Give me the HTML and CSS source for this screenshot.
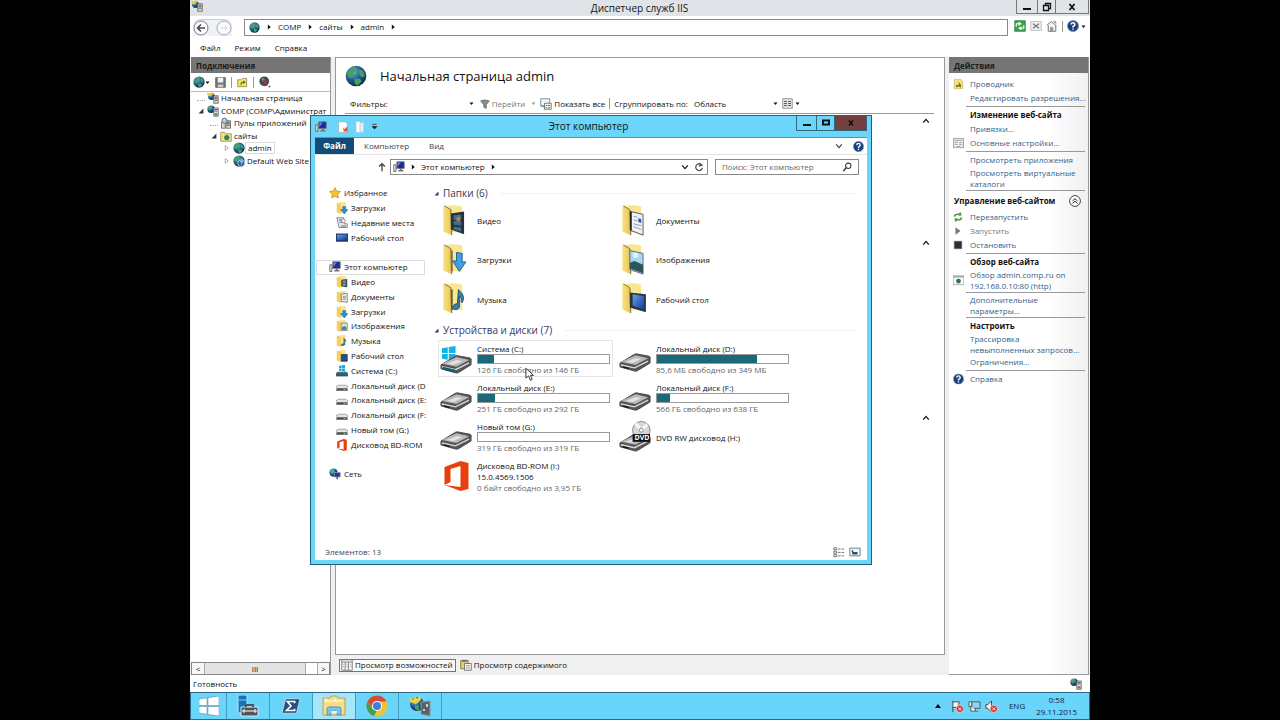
FILE: index.html
```html
<!DOCTYPE html>
<html lang="ru">
<head>
<meta charset="utf-8">
<title>Диспетчер служб IIS</title>
<link rel="stylesheet" href="styles.css">
</head>
<body>
<svg class="defs" aria-hidden="true">
  <defs>
    <radialGradient id="gSea" cx=".35" cy=".3" r=".8"><stop offset="0" stop-color="#6fb6dc"/><stop offset=".5" stop-color="#1d5c8c"/><stop offset="1" stop-color="#0b2440"/></radialGradient>
    <linearGradient id="gFold" x2="1"><stop offset="0" stop-color="#f8e283"/><stop offset="1" stop-color="#e9c452"/></linearGradient>
    <linearGradient id="gScr" x2="1" y2="1"><stop offset="0" stop-color="#6aa0e8"/><stop offset="1" stop-color="#123a96"/></linearGradient>
  </defs>
  <symbol id="globe" viewBox="0 0 16 16"><circle cx="8" cy="8" r="7.500" fill="url(#gSea)"/><path d="M2 5q2-3 6-3.500l1 2-3 2 1 2-3 2q-3-1-2-4.500zM10 3l3 1 1.500 4-2 1-2-2zM7 10l4 0 1 2-3 3-2-2z" fill="#47a05c"/></symbol>
  <symbol id="server" viewBox="0 0 16 16"><circle cx="5.500" cy="5.500" r="5" fill="url(#gSea)"/><path d="M1 4l4-3 2 2-3 4z" fill="#4aa850"/><path d="M9 4h6v11H9z" fill="#e2e2de" stroke="#555"/><path d="M10 6h4M10 8h4" stroke="#333"/><path d="M10 11h4v3h-4z" fill="#6b7a62"/></symbol>
  <symbol id="iis" viewBox="0 0 16 16"><circle cx="6" cy="6" r="4.500" fill="url(#gSea)"/><path d="M0 1l4 1 3-2 1 3-4 3-3-1z" fill="#ecc93a"/><path d="M9 5h6v10H9z" fill="#d7d7d0" stroke="#555"/><path d="M10 7h4M10 9h4M10 11h4" stroke="#444"/></symbol>
  <symbol id="pools" viewBox="0 0 16 16"><path d="M2 7h5v8H2zM8 5h6v10H8z" fill="#d6d8d8" stroke="#555"/><circle cx="6" cy="5" r="3.500" fill="#b9cdd2" stroke="#385a66"/><path d="M9 7h4M9 9h4M9 11h4" stroke="#333"/></symbol>
  <symbol id="foldglobe" viewBox="0 0 16 16"><path d="M1 3h5l1 2h8v10H1z" fill="#f4e287" stroke="#8e8144"/><circle cx="9" cy="10" r="3.500" fill="#348052"/></symbol>
  <symbol id="globeq" viewBox="0 0 16 16"><use href="#globe"/><circle cx="11" cy="11" r="4.500" fill="#16559c" stroke="#dfe9f5"/><path d="M9.500 10q0-1.800 1.600-1.800t1.500 1.500q0 1-1.500 1.500v.5m0 1v1" stroke="#fff" fill="none" stroke-width="1.200"/></symbol>
  <symbol id="floppy" viewBox="0 0 16 16"><path d="M1 1h14v14H1z" fill="#777" stroke="#444"/><path d="M4 1h8v7H4z" fill="#f2f2f2"/><path d="M4 11h8v4H4z" fill="#ccc"/></symbol>
  <symbol id="foldup" viewBox="0 0 16 16"><path d="M1 4h5l2-2h6v12H1z" fill="#f6e468" stroke="#7b7433"/><path d="M6 12V9q0-1.500 2-1.500h2M9 5.500l2.500 2L9 9.500" stroke="#2f7a2b" stroke-width="1.500" fill="none"/></symbol>
  <symbol id="globex" viewBox="0 0 16 16"><circle cx="7" cy="7" r="6.500" fill="#374c55"/><path d="M3 4l3-2 2 3-3 3z" fill="#699a72"/><path d="M5 5l6 8M12 5l-7 7" stroke="#c22f2f" stroke-width="1.500"/><path d="M13 13h2v2h-2z" fill="#333"/></symbol>
  <symbol id="back" viewBox="0 0 16 16"><circle cx="8" cy="8" r="7" fill="#fcfcfd" stroke="#7b8089"/><path d="M12 8H4.500M8 4.500L4.500 8 8 11.500" stroke="#444a55" stroke-width="1.600" fill="none"/></symbol>
  <symbol id="fwd" viewBox="0 0 16 16"><circle cx="8" cy="8" r="7" fill="#f7f9fc" stroke="#a3a8b4"/><path d="M5 8h6M9 6l2 2-2 2" stroke="#d4d9e1" fill="none"/></symbol>
  <symbol id="refresh" viewBox="0 0 16 16"><path d="M1 1h14v14H1z" fill="#37a549" stroke="#23702e"/><path d="M3 9V5h5m-2-2l3 2-3 2M13 7v4H8m2-2l-3 2 3 2" stroke="#fff" stroke-width="1.600" fill="none"/></symbol>
  <symbol id="stopx" viewBox="0 0 16 16"><path d="M1 2h14v12H1z" fill="#eee" stroke="#b4b4b4"/><path d="M4 5l8 6M12 5l-8 6" stroke="#777" stroke-width="1.500"/></symbol>
  <symbol id="home" viewBox="0 0 16 16"><path d="M1 7l6-5 7 6M3 7v8h10V7" fill="#f4f4f4" stroke="#777" stroke-width="1.300"/><path d="M6 10h3v5H6zM10 2h3v3" fill="#9a9a9a" stroke="#888"/></symbol>
  <symbol id="help" viewBox="0 0 16 16"><circle cx="8" cy="8" r="7.500" fill="#173f7c" stroke="#8ea3c2"/><path d="M5.500 6Q5.500 3.500 8 3.500T10.500 6Q10.500 7.300 8 8.700V10m0 1.300v1.700" stroke="#fff" stroke-width="2" fill="none"/></symbol>
  <symbol id="funnel" viewBox="0 0 16 16"><path d="M1 3q7-3 14 0L10 9v6l-4-2V9z" fill="#8b8b8b" stroke="#555"/></symbol>
  <symbol id="showall" viewBox="0 0 16 16"><path d="M1 1h12v10H1z" fill="#f5f8f8" stroke="#5c7280"/><path d="M6 7h9v8H6z" fill="#fff" stroke="#555"/><path d="M7.500 10h2m1 0h3m-6 3h2m1 0h3" stroke="#333"/><path d="M1 9l4 4v-3" fill="#3c8fb0"/></symbol>
  <symbol id="gridview" viewBox="0 0 16 16"><path d="M1 1h14v14H1z" fill="#e2e2e2" stroke="#777"/><path d="M3 5h4M9 5h4M3 8h4M9 8h4M3 11h4M9 11h4" stroke="#555" stroke-width="1.500"/></symbol>
  <symbol id="tabs" viewBox="0 0 16 16"><path d="M1 1h14v14H1z" fill="#f7f7f7" stroke="#666"/><path d="M1 4h14M5.500 4v11M10 4v11" stroke="#666"/><path d="M7 7h2M7 10h2M12 7h2M12 10h2M2 7h2M2 10h2" stroke="#999"/></symbol>
  <symbol id="clip" viewBox="0 0 16 16"><path d="M1 2h10v11H1z" fill="#e4d36b" stroke="#665f31"/><path d="M3 1h6v3H3z" fill="#777"/><path d="M6 6h9v9H6z" fill="#fafafa" stroke="#555"/><path d="M8 9h5M8 12h5" stroke="#666"/></symbol>
  <symbol id="explore" viewBox="0 0 16 16"><path d="M2 1h9l3 3v11H2z" fill="#f5e482" stroke="#bbaa50"/><path d="M7 4l2 4-2 3 5 2-1-5z" fill="#6f642c"/><circle cx="6" cy="11" r="2" fill="#8a7b34"/></symbol>
  <symbol id="props" viewBox="0 0 16 16"><path d="M1 1h14v14H1z" fill="#f4f4f4" stroke="#666"/><path d="M3 4h10M3 7h4M9 7h4M3 10h4M9 10h4M5 13h6" stroke="#777"/></symbol>
  <symbol id="restart" viewBox="0 0 16 16"><path d="M1 7q1-5 8-4.500L12 0l2 5.500-6 .5 1.500-1.500Q5 4 3.500 7.500zM15 9q-1 5-8 4.500L4 16l-2-5.500 6-.5-1.500 1.500Q11 12 12.500 8.500z" fill="#4a9a3e"/></symbol>
  <symbol id="play" viewBox="0 0 16 16"><path d="M4 2l8 6-8 6z" fill="#777"/></symbol>
  <symbol id="stop" viewBox="0 0 16 16"><path d="M2 2h12v12H2z" fill="#2b2f33" stroke="#666"/></symbol>
  <symbol id="browse" viewBox="0 0 16 16"><path d="M0 2h16v13H0z" fill="#fafafa" stroke="#777"/><path d="M0 3.500h16" stroke="#91a1b5" stroke-width="2"/><circle cx="8" cy="9.500" r="3.500" fill="#28745e"/></symbol>
  <symbol id="pc" viewBox="0 0 16 16"><path d="M1 5h3v9H1z" fill="#ddd" stroke="#555"/><path d="M5 1h10v9H5z" fill="#1c2c9a" stroke="#777"/><path d="M6 2h4L6 8z" fill="#7189d8"/><path d="M9 10h3v2h2v2H7v-2h2z" fill="#777"/></symbol>
  <symbol id="star" viewBox="0 0 16 16"><path d="M8 .8l2.200 4.700 5.100.6-3.800 3.500 1 5.100L8 12.200l-4.500 2.500 1-5.100L.7 6.100l5.100-.6z" fill="#f9c32f" stroke="#c58a19"/></symbol>
  <symbol id="sfold" viewBox="0 0 16 16"><path d="M1 1l6 1v14l-6-2z" fill="#f2cf5e"/><path d="M4 0h9v14H7V3z" fill="#f8e591"/></symbol>
  <symbol id="s-vid" viewBox="0 0 16 16"><use href="#sfold"/><path d="M7 5l8-1v11l-8-1z" fill="#3a4a55"/><path d="M9 6h4v3H9zM9 10h4v3H9z" fill="#7c9c98"/></symbol>
  <symbol id="s-doc" viewBox="0 0 16 16"><use href="#sfold"/><path d="M7 4l8-1v12l-8-1z" fill="#eef0f2" stroke="#666"/><path d="M9 7h4M9 9h4M9 11h4" stroke="#56779e"/></symbol>
  <symbol id="s-dl" viewBox="0 0 16 16"><use href="#sfold"/><path d="M9 6h4v4h3l-5 6-5-6h3z" fill="#2b8dd1" stroke="#1d5f94" stroke-width=".6"/></symbol>
  <symbol id="s-img" viewBox="0 0 16 16"><use href="#sfold"/><path d="M7 4h8v10H7z" fill="#cfe3ee" stroke="#777"/><path d="M8 13v-3l3-2 3 2v3z" fill="#47807a"/></symbol>
  <symbol id="s-mus" viewBox="0 0 16 16"><use href="#sfold"/><path d="M10 3l4 5-2 1v4q-3 3-5 1t3-3z" fill="#3f7480"/></symbol>
  <symbol id="s-desk" viewBox="0 0 16 16"><use href="#sfold"/><path d="M7 6h8v9H7z" fill="#1e4f9d" stroke="#333"/></symbol>
  <symbol id="recent" viewBox="0 0 16 16"><path d="M1 1h9l1 8h4v5H4L2 4z" fill="#e4e9ec" stroke="#5f6a72"/><path d="M4 4h4M5 7h3M7 12h6" stroke="#56606a" stroke-width="1.300"/><circle cx="10" cy="5" r="2.500" fill="#fff" stroke="#777"/></symbol>
  <symbol id="desk" viewBox="0 0 16 16"><path d="M0 2h16v11H0z" fill="#1d3d76"/><path d="M1.500 3.500h13v7h-13z" fill="url(#gScr)"/></symbol>
  <symbol id="sdisk" viewBox="0 0 16 16"><path d="M3 7h10l3 2v5H0V9z" fill="#e3e5e5" stroke="#777" stroke-width=".8"/><path d="M1 11h14v3H1z" fill="#4a4d4d"/><path d="M10 12h3v1h-3z" fill="#9ed0a0"/></symbol>
  <symbol id="swin" viewBox="0 0 16 16"><path d="M4 1l3.500-.5V4H4zM8 .4l4-.4v4H8zM4 4.500h3.500V8L4 7.600zM8 4.500h4v4L8 8z" fill="#16a7dc"/><path d="M2 9h12l2 2v4H0v-4z" fill="#4d646a"/><path d="M1 12h14v3H1z" fill="#265c78"/></symbol>
  <symbol id="office" viewBox="0 0 26 30"><path d="M1 6L17 0l8 2v26l-8 2L1 24l16 2V5L7 8v13l-6 3z" fill="#e8400d"/></symbol>
  <symbol id="net" viewBox="0 0 16 16"><circle cx="6" cy="6" r="5.500" fill="url(#gSea)"/><path d="M2 4l4-3 1 4-4 3z" fill="#52a8a8"/><path d="M7 6h8v6H7z" fill="#26359f" stroke="#99a"/><path d="M10 12h2v3h-2z" fill="#555"/></symbol>
  <symbol id="bfold" viewBox="0 0 32 36"><path d="M4 2q14-2 18 1v27H10z" fill="#f8e790"/><path d="M2 2l9 5v26l-9-4z" fill="url(#gFold)"/><path d="M3 2l7 4 1 27" fill="none" stroke="#7d6a32"/></symbol>
  <symbol id="b-vid" viewBox="0 0 32 36"><use href="#bfold"/><path d="M10 10l14-2v24l-14-5z" fill="#25323c"/><path d="M13 12l8-1v5l-8 1zM13 18h8v5l-8-1zM13 24l8 1v4l-8-2z" fill="#406f8f"/><circle cx="18" cy="16" r="2.500" fill="#b67a4a"/></symbol>
  <symbol id="b-doc" viewBox="0 0 32 36"><use href="#bfold"/><path d="M11 8l13 3v22l-13-5z" fill="#eef1f5" stroke="#555"/><path d="M11 8v20" stroke="#222" stroke-width="2"/><path d="M14 13l4 1M14 17l4 1M14 21l8 2M14 24l8 3" stroke="#8b99aa"/><path d="M19 15l3 1v4l-3-1z" fill="#2854a3"/></symbol>
  <symbol id="b-dl" viewBox="0 0 32 36"><use href="#bfold"/><path d="M11 8v22" stroke="#7d7148" stroke-width="2"/><path d="M16 10l6 1v9h4l-7 10-7-11h4z" fill="#3e9fe2" stroke="#1d6098"/></symbol>
  <symbol id="b-img" viewBox="0 0 32 36"><use href="#bfold"/><path d="M10 8l14 3v22l-14-5z" fill="#a9d6ee" stroke="#667"/><path d="M10 21l5-2 9 4v9l-14-5z" fill="#2e5659"/><circle cx="16" cy="13" r="3" fill="#e2f2fb"/></symbol>
  <symbol id="b-mus" viewBox="0 0 32 36"><use href="#bfold"/><path d="M11 8v22" stroke="#685c35" stroke-width="2"/><path d="M18 8l1 1q7 6 3 13l-1-1q1-4-2-6v12q-3 4-7 1 0-5 5-5z" fill="#3580ae" stroke="#234f6c"/></symbol>
  <symbol id="b-desk" viewBox="0 0 32 36"><use href="#bfold"/><path d="M10 11l17 2v19l-17-5z" fill="#2a3448"/><path d="M13 13l12 2v14l-12-4z" fill="url(#gScr)"/></symbol>
  <symbol id="disk" viewBox="0 0 34 22"><path d="M1 11L16 2q2-1 4 0l11 2q2 1 1 3v4L19 19q-2 1-4 0L1 15z" fill="#555" stroke="#4a4a4a"/><path d="M2 10L17 3l13 3-13 7z" fill="#b9b9b9"/><path d="M7 10l10-4 6 1-9 4z" fill="#e3e3e3"/><path d="M2 13l14 3 14-7" fill="none" stroke="#dadada" stroke-width="1.500"/><path d="M4 15l6 1.500" stroke="#111" stroke-width="1.500"/></symbol>
  <symbol id="diskwin" viewBox="0 0 34 34"><path d="M2 6l6-1.200v6H2zM9 4.600L16 3.500v7.300H9zM2 11.800h6v6l-6-1zM9 11.800h7v7.300l-7-1.100z" fill="#14b3e4"/><svg y="12" width="34" height="22"><use href="#disk"/></svg><path d="M3 25l13 3v3L3 28z" fill="#195a6e"/></symbol>
  <symbol id="dvd" viewBox="0 0 34 34"><svg y="12" width="34" height="22"><use href="#disk"/></svg><circle cx="23" cy="10" r="9" fill="#d4d6d8" stroke="#888"/><path d="M23 10L17 3M23 10l6-6" stroke="#f8f8f8" stroke-width="3"/><circle cx="23" cy="10" r="2" fill="#fff" stroke="#888"/><path d="M14 14h18v8H14z" fill="#111"/></symbol>
  <symbol id="page" viewBox="0 0 16 16"><path d="M2 1h9l3 3v11H2z" fill="#fff" stroke="#aaa"/><path d="M8 9l2 2 4-4v7H9z" fill="#df5636"/></symbol>
  <symbol id="blank" viewBox="0 0 16 16"><path d="M3 1h5v14H3z" fill="#fcfcf0"/><path d="M8 2h5v13H8z" fill="#e5eff4" stroke="#bbd"/></symbol>
  <symbol id="qdown" viewBox="0 0 10 10"><path d="M2 2h6M1.500 5h7L5 8.500z" stroke="#222" fill="#222"/></symbol>
  <symbol id="chev" viewBox="0 0 10 10"><path d="M1.500 3L5 7l3.500-4" stroke="currentColor" fill="none" stroke-width="1.500"/></symbol>
  <symbol id="chevup" viewBox="0 0 10 10"><path d="M1.500 7L5 3l3.500 4" stroke="currentColor" fill="none" stroke-width="1.600"/></symbol>
  <symbol id="down" viewBox="0 0 10 10"><path d="M1 3h8L5 8z" fill="currentColor"/></symbol>
  <symbol id="right" viewBox="0 0 10 10"><path d="M3 1v8l5-4z" fill="currentColor"/></symbol>
  <symbol id="open" viewBox="0 0 10 10"><path d="M9 1v8H1z" fill="currentColor"/></symbol>
  <symbol id="closed" viewBox="0 0 10 10"><path d="M2 1v8l5-4z" fill="#fff" stroke="#777"/></symbol>
  <symbol id="min" viewBox="0 0 12 12"><path d="M2 7h8v2H2z" fill="currentColor"/></symbol>
  <symbol id="max" viewBox="0 0 12 12"><path d="M3 3.500h6v4H3z" stroke="currentColor" stroke-width="2" fill="none"/></symbol>
  <symbol id="rest" viewBox="0 0 12 12"><path d="M2.500 4.500h5v5h-5zM4.500 4V2.500h5v5H8" stroke="currentColor" stroke-width="1.300" fill="none"/></symbol>
  <symbol id="close" viewBox="0 0 12 12"><path d="M3.500 3l5 6M8.500 3l-5 6" stroke="currentColor" stroke-width="1.800"/></symbol>
  <symbol id="circup" viewBox="0 0 12 12"><circle cx="6" cy="6" r="5.400" fill="#fff" stroke="#444"/><path d="M3.500 6L6 3.700 8.500 6M3.500 8.500L6 6.200l2.500 2.300" stroke="#222" fill="none"/></symbol>
  <symbol id="up" viewBox="0 0 12 12"><path d="M6 11V2M2.500 5.500L6 2l3.500 3.500" stroke="#444" stroke-width="1.600" fill="none"/></symbol>
  <symbol id="reload" viewBox="0 0 12 12"><path d="M9 3.500A4 4 0 1 0 10 7M6 1.200L9.500 3.700 6 5" stroke="#444" stroke-width="1.400" fill="none"/></symbol>
  <symbol id="loupe" viewBox="0 0 12 12"><circle cx="7.500" cy="4.500" r="3.200" stroke="#444" stroke-width="1.300" fill="none"/><path d="M5 7l-3.500 4" stroke="#444" stroke-width="1.800"/></symbol>
  <symbol id="details" viewBox="0 0 14 12"><path d="M1 1h3v2.500H1zM1 5h3v2.500H1zM1 9h3v2.500H1z" fill="#fff" stroke="#666"/><path d="M5.500 2.500h3.500m1 0h3M5.500 6.500h3.500m1 0h3M5.500 10.500h3.500m1 0h3" stroke="#666"/></symbol>
  <symbol id="tiles" viewBox="0 0 14 12"><path d="M1 1.500h12v9H1z" fill="#f2f8fa" stroke="#55707a"/><path d="M3 4h2v2h5v3H4z" fill="#2d5261"/></symbol>
  <symbol id="win" viewBox="0 0 20 20"><path d="M0 3l8-1.200V9.500H0zM9 1.700L20 0v9.500H9zM0 10.500h8v7.700L0 17zM9 10.500h11V20L9 18.400z" fill="#fff" stroke="#4b7d96" stroke-width=".5"/></symbol>
  <symbol id="srvmgr" viewBox="0 0 22 22"><path d="M1 0h9v18H1z" fill="#1477b5" stroke="#b8e6f8"/><path d="M2 5h7" stroke="#84c8ee"/><path d="M4 12h17v9H4z" fill="#4f5459" stroke="#d8eaf0"/><path d="M9 12v-2h7v2" stroke="#4f5459" stroke-width="2" fill="none"/><path d="M5 16h15M7 14v4M18 14v4" stroke="#fff"/></symbol>
  <symbol id="ps" viewBox="0 0 22 18"><path d="M5 1h16l-4 16H1z" fill="#27517c" stroke="#c4ddea"/><path d="M15 6V4H7l4 5-5 5h9v-2" stroke="#fff" stroke-width="1.800" fill="none"/></symbol>
  <symbol id="files" viewBox="0 0 24 22"><path d="M1 3h7l1-2h6l1 2h7v17H1z" fill="#f3df87" stroke="#b6a154"/><path d="M3 6h18M4 3v3M13 3v3" stroke="#fff"/><path d="M5 20v-6q0-2 2-2h10q2 0 2 2v6h-4v-4H9v4z" fill="#7cc4e8" stroke="#5594bb"/><path d="M9 16h6v2H9z" fill="#eaf7fd"/></symbol>
  <symbol id="chrome" viewBox="0 0 22 22"><circle cx="11" cy="11" r="10.500" fill="#eac53b"/><path d="M1.500 6.500A10.500 10.500 0 0 1 20.500 6.500H11L6.500 13z" fill="#d74a39"/><path d="M1.500 6.500L6.500 14l4 2-2.500 5A10.500 10.500 0 0 1 1.500 6.500z" fill="#3f9d55"/><circle cx="11" cy="11" r="5" fill="#fff"/><circle cx="11" cy="11" r="4" fill="#3c7fd8"/></symbol>
  <symbol id="iisbig" viewBox="0 0 22 22"><circle cx="8" cy="9" r="7" fill="url(#gSea)"/><path d="M0 2l4 3 2-4 2 3 3-4 1 5-5 4-6-2z" fill="#ead540"/><path d="M6 10l4 1v5l-4-2z" fill="#46a06b"/><path d="M12 7l9-1v15l-9-2z" fill="#5a6267" stroke="#89949a"/><path d="M17 9h2v3h-2zM14 14h2v2h-2z" fill="#c5ced2"/></symbol>
  <symbol id="flag" viewBox="0 0 14 14"><path d="M2 1v12M2 2h7l-1 3 2 3H2" stroke="#444" fill="#f7f7f7"/><circle cx="9.500" cy="9.500" r="4" fill="#cf3d37" stroke="#fff" stroke-width=".6"/><path d="M8 8l3 3M11 8l-3 3" stroke="#fff"/></symbol>
  <symbol id="lan" viewBox="0 0 14 14"><path d="M4 2h9v7H4z" fill="#8fd4ee" stroke="#4a5960"/><path d="M1 2h3v5H1zM3 7v5h8M8 9v3" stroke="#4a5960" fill="#e7eef0"/></symbol>
  <symbol id="vol" viewBox="0 0 14 14"><path d="M1 5h2l4-4v12L3 9H1z" fill="#f2f2f2" stroke="#444"/><circle cx="9.500" cy="9.500" r="4" fill="#cf3d37" stroke="#fff" stroke-width=".6"/><path d="M8 8l3 3M11 8l-3 3" stroke="#fff"/></symbol>
  <symbol id="cursor" viewBox="0 0 10 16"><path d="M1 1v11l3-2.500 2 5 2-1-2-4.500h3.500z" fill="#fff" stroke="#222"/></symbol>
</svg>

<div class="desktop">
  <div class="iis">
    <header class="titlebar">
      <svg class="i12"><use href="#iis"/></svg>
      <h1>Диспетчер служб IIS</h1>
      <div class="winbtns">
        <button aria-label="Свернуть"><svg class="i12"><use href="#min"/></svg></button>
        <button aria-label="Восстановить"><svg class="i12"><use href="#rest"/></svg></button>
        <button aria-label="Закрыть"><svg class="i12"><use href="#close"/></svg></button>
      </div>
    </header>

    <div class="addressrow">
      <div class="navbtns">
        <button aria-label="Назад"><svg class="i16"><use href="#back"/></svg></button>
        <button aria-label="Вперёд"><svg class="i16"><use href="#fwd"/></svg></button>
      </div>
      <nav class="crumbs">
        <svg class="i11"><use href="#globe"/></svg><svg class="i6"><use href="#right"/></svg>
        <a href="#">COMP</a><svg class="i6"><use href="#right"/></svg>
        <a href="#">сайты</a><svg class="i6"><use href="#right"/></svg>
        <a href="#">admin</a><svg class="i6"><use href="#right"/></svg>
      </nav>
      <div class="addrtools">
        <button aria-label="Обновить"><svg class="i12"><use href="#refresh"/></svg></button>
        <button aria-label="Остановить"><svg class="i12"><use href="#stopx"/></svg></button>
        <button aria-label="Домой"><svg class="i12"><use href="#home"/></svg></button>
        <span class="vline"></span>
        <button aria-label="Справка"><svg class="i12"><use href="#help"/></svg><svg class="i5"><use href="#down"/></svg></button>
      </div>
    </div>

    <nav class="menubar"><button>Файл</button><button>Режим</button><button>Справка</button></nav>

    <div class="workspace">
      <section class="conn">
        <h2 class="panehead">Подключения</h2>
        <div class="conntools">
          <button aria-label="Подключиться"><svg class="i12"><use href="#globe"/></svg><svg class="i5"><use href="#down"/></svg></button>
          <button aria-label="Сохранить"><svg class="i11"><use href="#floppy"/></svg></button>
          <span class="vline"></span>
          <button aria-label="Вверх"><svg class="i11"><use href="#foldup"/></svg></button>
          <span class="vline"></span>
          <button aria-label="Удалить"><svg class="i12"><use href="#globex"/></svg></button>
        </div>
        <ul class="tree">
          <li class="l1"><span class="dots"></span><svg class="i12"><use href="#iis"/></svg><span>Начальная страница</span></li>
          <li class="l1"><svg class="tw"><use href="#open"/></svg><svg class="i12"><use href="#server"/></svg><span>COMP (COMP\Администрат</span></li>
          <li class="l2"><span class="dots"></span><svg class="i12"><use href="#pools"/></svg><span>Пулы приложений</span></li>
          <li class="l2"><svg class="tw"><use href="#open"/></svg><svg class="i12"><use href="#foldglobe"/></svg><span>сайты</span></li>
          <li class="l3"><svg class="tw"><use href="#closed"/></svg><svg class="i12"><use href="#globe"/></svg><span class="cur">admin</span></li>
          <li class="l3"><svg class="tw"><use href="#closed"/></svg><svg class="i12"><use href="#globeq"/></svg><span>Default Web Site</span></li>
        </ul>
        <div class="hscroll">
          <button aria-label="Влево">&lt;</button><span class="thumb">III</span><span class="track"></span><button aria-label="Вправо">&gt;</button>
        </div>
      </section>

      <section class="center">
        <div class="home">
          <div class="homehead"><svg class="i22"><use href="#globe"/></svg><h2>Начальная страница admin</h2></div>
          <div class="filters">
            <label for="flt">Фильтры:</label>
            <input id="flt" type="text">
            <svg class="i5"><use href="#down"/></svg>
            <button class="go"><svg class="i10"><use href="#funnel"/></svg>Перейти</button>
            <svg class="i5 dim"><use href="#down"/></svg>
            <button><svg class="i12"><use href="#showall"/></svg>Показать все</button>
            <span class="vline"></span>
            <label for="grp">Сгруппировать по:</label>
            <select id="grp"><option>Область</option></select>
            <svg class="i5"><use href="#down"/></svg>
            <button class="gv" aria-label="Вид"><svg class="i11"><use href="#gridview"/></svg><svg class="i5"><use href="#down"/></svg></button>
          </div>
          <div class="areas">
            <div><button aria-label="Свернуть группу"><svg class="i8"><use href="#chevup"/></svg></button></div>
            <div><button aria-label="Свернуть группу"><svg class="i8"><use href="#chevup"/></svg></button></div>
            <div><button aria-label="Свернуть группу"><svg class="i8"><use href="#chevup"/></svg></button></div>
          </div>
        </div>
        <div class="viewtabs">
          <button class="on"><svg class="i12"><use href="#tabs"/></svg>Просмотр возможностей</button>
          <button><svg class="i12"><use href="#clip"/></svg>Просмотр содержимого</button>
        </div>
      </section>

      <aside class="actions">
        <h2 class="panehead">Действия</h2>
        <div class="actlist">
          <a href="#"><svg class="i11"><use href="#explore"/></svg>Проводник</a>
          <a href="#">Редактировать разрешения...</a>
          <hr>
          <h3>Изменение веб-сайта</h3>
          <a href="#">Привязки...</a>
          <a href="#"><svg class="i11"><use href="#props"/></svg>Основные настройки...</a>
          <hr>
          <a href="#">Просмотреть приложения</a>
          <a href="#" class="two">Просмотреть виртуальные каталоги</a>
          <hr>
          <h3 class="manage">Управление веб-сайтом<button aria-label="Свернуть"><svg class="i12"><use href="#circup"/></svg></button></h3>
          <a href="#"><svg class="i10"><use href="#restart"/></svg>Перезапустить</a>
          <a href="#" class="off"><svg class="i10"><use href="#play"/></svg>Запустить</a>
          <a href="#"><svg class="i10"><use href="#stop"/></svg>Остановить</a>
          <hr>
          <h3>Обзор веб-сайта</h3>
          <a href="#" class="two"><svg class="i11"><use href="#browse"/></svg>Обзор admin.comp.ru on 192.168.0.10:80 (http)</a>
          <hr>
          <a href="#" class="two">Дополнительные<br>параметры...</a>
          <hr>
          <h3>Настроить</h3>
          <a href="#" class="two">Трассировка<br>невыполненных запросов...</a>
          <a href="#">Ограничения...</a>
          <hr>
          <a href="#"><svg class="i11"><use href="#help"/></svg>Справка</a>
        </div>
      </aside>
    </div>

    <footer class="status"><span>Готовность</span><svg class="i12"><use href="#server"/></svg></footer>
  </div>

  <footer class="taskbar">
    <button class="start" aria-label="Пуск"><svg class="i20"><use href="#win"/></svg></button>
    <button aria-label="Диспетчер серверов"><svg class="i22"><use href="#srvmgr"/></svg></button>
    <button aria-label="PowerShell"><svg class="i20"><use href="#ps"/></svg></button>
    <button class="act" aria-label="Проводник"><svg class="i24"><use href="#files"/></svg></button>
    <button aria-label="Chrome"><svg class="i22"><use href="#chrome"/></svg></button>
    <button aria-label="IIS"><svg class="i22"><use href="#iisbig"/></svg></button>
    <div class="tray">
      <svg class="i6"><path d="M0 5h6L3 1z"/></svg>
      <svg class="i13"><use href="#flag"/></svg>
      <svg class="i13"><use href="#lan"/></svg>
      <svg class="i13"><use href="#vol"/></svg>
      <span class="lang">ENG</span>
      <time class="clock">0:58<br>29.11.2015</time>
    </div>
  </footer>

  <div class="explorer">
    <header class="exptitle">
      <div class="quick">
        <svg class="i12"><use href="#pc"/></svg><span class="vline"></span>
        <button aria-label="Свойства"><svg class="i12"><use href="#page"/></svg></button>
        <button aria-label="Новая папка"><svg class="i12"><use href="#blank"/></svg></button>
        <button aria-label="Настройка панели"><svg class="i7"><use href="#qdown"/></svg></button>
        <span class="vline"></span>
      </div>
      <h2>Этот компьютер</h2>
      <div class="expbtns">
        <button aria-label="Свернуть"><svg class="i12"><use href="#min"/></svg></button>
        <button aria-label="Развернуть"><svg class="i12"><use href="#max"/></svg></button>
        <button class="x" aria-label="Закрыть"><svg class="i10"><use href="#close"/></svg></button>
      </div>
    </header>
    <div class="client">
      <nav class="ribbon">
        <button class="file">Файл</button><button>Компьютер</button><button>Вид</button>
        <span class="grow"></span>
        <button aria-label="Развернуть ленту"><svg class="i8"><use href="#chev"/></svg></button>
        <button aria-label="Справка"><svg class="i11"><use href="#help"/></svg></button>
      </nav>
      <div class="exprow">
        <button aria-label="Вверх"><svg class="i10"><use href="#up"/></svg></button>
        <div class="expaddr">
          <svg class="i12"><use href="#pc"/></svg><svg class="i6"><use href="#right"/></svg><a href="#">Этот компьютер</a><svg class="i6"><use href="#right"/></svg>
          <span class="grow"></span>
          <button aria-label="Журнал"><svg class="i8"><use href="#chev"/></svg></button>
          <button aria-label="Обновить"><svg class="i10"><use href="#reload"/></svg></button>
        </div>
        <div class="search"><input type="text" aria-label="Поиск" placeholder="Поиск: Этот компьютер"><svg class="i10"><use href="#loupe"/></svg></div>
      </div>
      <div class="expmain">
        <nav class="side">
          <ul class="fav">
            <li class="top"><svg class="i12"><use href="#star"/></svg>Избранное</li>
            <li><svg class="i12"><use href="#s-dl"/></svg>Загрузки</li>
            <li><svg class="i12"><use href="#recent"/></svg>Недавние места</li>
            <li><svg class="i12"><use href="#desk"/></svg>Рабочий стол</li>
          </ul>
          <ul class="comp">
            <li class="top sel"><svg class="i12"><use href="#pc"/></svg>Этот компьютер</li>
            <li><svg class="i12"><use href="#s-vid"/></svg>Видео</li>
            <li><svg class="i12"><use href="#s-doc"/></svg>Документы</li>
            <li><svg class="i12"><use href="#s-dl"/></svg>Загрузки</li>
            <li><svg class="i12"><use href="#s-img"/></svg>Изображения</li>
            <li><svg class="i12"><use href="#s-mus"/></svg>Музыка</li>
            <li><svg class="i12"><use href="#s-desk"/></svg>Рабочий стол</li>
            <li><svg class="i12"><use href="#swin"/></svg>Система (C:)</li>
            <li><svg class="i12"><use href="#sdisk"/></svg>Локальный диск (D</li>
            <li><svg class="i12"><use href="#sdisk"/></svg>Локальный диск (E:</li>
            <li><svg class="i12"><use href="#sdisk"/></svg>Локальный диск (F:</li>
            <li><svg class="i12"><use href="#sdisk"/></svg>Новый том (G:)</li>
            <li><svg class="i12"><use href="#office"/></svg>Дисковод BD-ROM</li>
          </ul>
          <ul class="netlist"><li class="top"><svg class="i12"><use href="#net"/></svg>Сеть</li></ul>
        </nav>
        <main class="files">
          <h3><svg class="i5"><use href="#open"/></svg>Папки (6)</h3>
          <div class="items folders">
            <div class="item"><svg class="ico"><use href="#b-vid"/></svg><span>Видео</span></div>
            <div class="item"><svg class="ico"><use href="#b-doc"/></svg><span>Документы</span></div>
            <div class="item"><svg class="ico"><use href="#b-dl"/></svg><span>Загрузки</span></div>
            <div class="item"><svg class="ico"><use href="#b-img"/></svg><span>Изображения</span></div>
            <div class="item"><svg class="ico"><use href="#b-mus"/></svg><span>Музыка</span></div>
            <div class="item"><svg class="ico"><use href="#b-desk"/></svg><span>Рабочий стол</span></div>
          </div>
          <h3><svg class="i5"><use href="#open"/></svg>Устройства и диски (7)</h3>
          <div class="items drives">
            <div class="item hot"><svg class="ico"><use href="#diskwin"/></svg><div>Система (C:)<div class="bar"><i style="width:12%"></i></div><small>126 ГБ свободно из 146 ГБ</small></div></div>
            <div class="item"><svg class="ico hd"><use href="#disk"/></svg><div>Локальный диск (D:)<div class="bar"><i style="width:76%"></i></div><small>85,6 МБ свободно из 349 МБ</small></div></div>
            <div class="item"><svg class="ico hd"><use href="#disk"/></svg><div>Локальный диск (E:)<div class="bar"><i style="width:13%"></i></div><small>251 ГБ свободно из 292 ГБ</small></div></div>
            <div class="item"><svg class="ico hd"><use href="#disk"/></svg><div>Локальный диск (F:)<div class="bar"><i style="width:10%"></i></div><small>566 ГБ свободно из 638 ГБ</small></div></div>
            <div class="item"><svg class="ico hd"><use href="#disk"/></svg><div>Новый том (G:)<div class="bar"></div><small>319 ГБ свободно из 319 ГБ</small></div></div>
            <div class="item"><span class="dvdwrap"><svg class="ico"><use href="#dvd"/></svg><b>DVD</b></span><span>DVD RW дисковод (H:)</span></div>
            <div class="item"><svg class="ico logo"><use href="#office"/></svg><div>Дисковод BD-ROM (I:)<br>15.0.4569.1506<br><small>0 байт свободно из 3,95 ГБ</small></div></div>
          </div>
        </main>
      </div>
      <footer class="expstatus"><span>Элементов: 13</span><span class="grow"></span>
        <button aria-label="Таблица"><svg class="i12"><use href="#details"/></svg></button>
        <button aria-label="Значки"><svg class="i12"><use href="#tiles"/></svg></button>
      </footer>
    </div>
  </div>
  <svg class="cursor"><use href="#cursor"/></svg>
</div>
</body>
</html>
```
FILE: styles.css
```css
* { box-sizing: border-box; }
body { margin: 0; padding: 0 190px; background: #000; font: 8px/12px "Open Sans", "Noto Sans", sans-serif; color: #111; }
.defs { position: absolute; width: 0; height: 0; }
h1, h2, h3, ul { margin: 0; padding: 0; font: inherit; list-style: none; }
button { display: flex; align-items: center; gap: 2px; margin: 0; padding: 0; border: 0; background: none; color: inherit; font: inherit; white-space: nowrap; }
input, select { min-width: 0; padding: 0; border: 0; outline: 0; background: none; color: inherit; font: inherit; appearance: none; }
a { color: inherit; text-decoration: none; }
svg { flex: none; display: block; }
.i5 { width: 5px; height: 5px; }
.i6 { width: 6px; height: 6px; }
.i7 { width: 7px; height: 7px; }
.i8 { width: 8px; height: 8px; }
.i10 { width: 10px; height: 10px; }
.i11 { width: 11px; height: 11px; }
.i12 { width: 12px; height: 12px; }
.i13 { width: 13px; height: 13px; }
.i16 { width: 16px; height: 16px; }
.i20 { width: 20px; height: 20px; }
.i22 { width: 22px; height: 22px; }
.i24 { width: 24px; height: 24px; }
.grow { flex: 1; }
.vline { width: 1px; height: 11px; background: #999; }
.dim { color: #999; }

.desktop { position: relative; display: flex; flex-direction: column; height: 100vh; overflow: hidden; }
.iis { flex: 1; display: flex; flex-direction: column; min-height: 0; background: #fff; }

.titlebar { display: grid; grid-template-columns: 72px 1fr 73px; height: 16px; padding: 0 1px; background: #e0e3e8; }
.titlebar h1 { font-size: 10px; line-height: 16px; text-align: center; }
.winbtns { display: grid; grid-template-columns: 20px 18px 1fr; height: 14px; border: 1px solid #777; border-top: 0; }
.winbtns button { justify-content: center; border-left: 1px solid #777; }
.winbtns button:first-child { border-left: 0; }

.addressrow { display: flex; align-items: center; gap: 6px; height: 22px; padding-left: 3px; }
.navbtns { display: flex; gap: 7px; height: 17px; border-top: 1px solid #c9ccd6; border-radius: 8px 8px 0 0; background: #eef1f8; }
.crumbs { flex: 1; display: flex; align-items: center; gap: 6px; height: 17px; margin-left: 6px; padding-left: 4px; border: 1px solid #888; }
.addrtools { display: flex; align-items: center; gap: 4px; width: 76px; padding-bottom: 2px; }

.menubar { display: flex; align-items: center; gap: 14px; height: 19px; padding-left: 10px; }

.workspace { flex: 1; display: grid; grid-template-columns: 140px 1fr 140px; gap: 4px; min-height: 0; padding: 0 1px; background: #f0f0f0; }
.panehead { height: 16px; padding-left: 5px; background: #757575; color: #1c1c1c; font-weight: 700; line-height: 17px; }
.conn { display: flex; flex-direction: column; min-width: 0; background: #fff; border-right: 1px solid #999; overflow: hidden; }
.conntools { display: flex; align-items: center; gap: 5px; height: 19px; padding-left: 2px; border-bottom: 1px solid #bbb; }
.conntools button { gap: 0; }
.tree { display: grid; grid-auto-rows: 1fr; height: 75px; }
.tree li { display: flex; align-items: center; gap: 2px; white-space: nowrap; }
.tree .l1 { padding-left: 6px; }
.tree .l2 { padding-left: 19px; }
.tree .l3 { padding-left: 32px; }
.tw, .dots { width: 8px; height: 6px; color: #333; }
.dots { border-bottom: 1px dotted #aaa; }
.cur { margin-left: -2px; padding: 0 2px; border: 1px solid #ddd; line-height: 10px; }
.hscroll { display: flex; height: 13px; margin-top: auto; border: 1px solid #888; font-size: 8px; }
.hscroll button { justify-content: center; width: 12px; background: #f7f7f7; }
.hscroll button:last-child { border-left: 1px solid #aaa; }
.thumb { flex: 1; background: #e4e4e4; border: 1px solid #aaa; border-width: 0 1px; text-align: center; line-height: 11px; }
.track { width: 11px; }

.center { display: flex; flex-direction: column; min-width: 0; }
.home { flex: 1; padding: 0 10px 0 9px; background: #fff; border: 1px solid #999; }
.homehead { display: flex; align-items: center; gap: 13px; height: 36px; }
.homehead h2 { font-size: 13px; line-height: 18px; }
.filters { display: flex; align-items: center; height: 20px; padding-left: 5px; border-bottom: 1px solid #999; white-space: nowrap; }
.filters input { width: 81px; }
.filters .go { margin: 0 6px; color: #777; }
.filters .dim { margin-right: 4px; }
.filters .vline { margin: 0 4px; }
.filters select { width: 79px; margin-left: 6px; }
.filters .gv { margin-left: 4px; }
.areas { display: flex; flex-direction: column; height: 480px; }
.areas div { display: flex; justify-content: flex-end; align-items: flex-start; height: 122px; padding: 3px 4px; }
.areas div:nth-child(2) { height: 175px; }
.viewtabs { display: flex; align-items: center; gap: 2px; height: 20px; padding-left: 4px; }
.viewtabs button { height: 13px; padding: 0 2px 0 1px; border: 1px solid transparent; }
.viewtabs .on { border-color: #4c7fa3; background: #fafafa; }

.actions { min-width: 0; background: linear-gradient(90deg, #fff 70%, #f0f0f0); border: 1px solid #999; border-width: 0 1px 1px 0; }
.actlist { padding: 4px 3px 0 21px; }
.actlist a { position: relative; display: block; line-height: 14px; color: #336289; white-space: nowrap; }
.actlist .two { line-height: 11px; white-space: normal; }
.actlist .off { color: #777; }
.actlist a svg { position: absolute; left: -17px; top: 50%; transform: translateY(-50%); }
.actlist hr { height: 1px; margin: 1px 0 1px -4px; border: 0; background: #999; }
.actlist h3 { font-weight: 700; line-height: 14px; color: #111; white-space: nowrap; }
.actlist .manage { display: flex; align-items: center; justify-content: space-between; height: 18px; margin-left: -16px; padding-right: 4px; }

.status { display: flex; align-items: center; justify-content: space-between; height: 17px; padding: 0 8px 0 3px; }

.taskbar { display: flex; height: 28px; background: #6ad5fa; border: 1px solid #2a6a8c; }
.taskbar > button { justify-content: center; width: 43px; border-right: 1px solid #3f9dc0; }
.taskbar .start { width: 36px; }
.taskbar .act { background: #a5e6fb; }
.tray { display: flex; align-items: center; gap: 4px; margin-left: auto; padding-right: 12px; color: #123; }
.tray .i6 { margin-right: 6px; }
.lang { margin: 0 7px; }
.clock { text-align: center; }

.explorer { position: absolute; left: 120px; top: 115px; display: flex; flex-direction: column; width: 562px; height: 450px; padding: 0 4px 4px; background: #6bd6f9; border: 1px solid #245e78; }
.exptitle { display: grid; grid-template-columns: 66px 1fr 71px; height: 21px; }
.exptitle h2 { font-size: 10px; line-height: 21px; text-align: center; }
.quick { display: flex; align-items: center; gap: 5px; }
.quick button { gap: 0; }
.quick .vline { background: #5a93a8; }
.expbtns { display: grid; grid-template-columns: 20px 18px 1fr; height: 15px; border: 1px solid #33687c; border-top: 0; color: #111; }
.expbtns button { justify-content: center; border-right: 1px solid #33687c; }
.expbtns .x { background: #73403f; border: 0; }
.client { flex: 1; display: flex; flex-direction: column; min-height: 0; background: #fff; border-top: 1px solid #479ab8; }
.ribbon { display: flex; align-items: center; gap: 10px; height: 17px; padding-right: 3px; border-bottom: 1px solid #e4e4e4; color: #444; }
.ribbon .file { justify-content: center; width: 39px; height: 16px; background: #134b76; color: #fff; font-weight: 700; }
.ribbon button + button { margin-right: 10px; }
.ribbon .grow ~ button { margin: 0; }
.exprow { display: flex; align-items: center; height: 23px; padding: 0 8px 0 62px; }
.expaddr { flex: 1; display: flex; align-items: center; gap: 5px; height: 16px; margin-left: 3px; padding: 0 3px 0 2px; border: 1px solid #888; }
.search { display: flex; align-items: center; width: 144px; height: 16px; margin-left: 7px; padding: 0 6px; border: 1px solid #888; }
.search input { flex: 1; }
.search input::placeholder { color: #666; opacity: 1; }
.expmain { flex: 1; display: grid; grid-template-columns: 111px 1fr; min-height: 0; }
.side { padding-top: 8px; overflow: hidden; }
.side ul { display: grid; grid-auto-rows: 1fr; }
.side .fav { height: 59px; }
.side .comp { height: 192px; margin-top: 15px; }
.side .netlist { height: 15px; margin-top: 14px; }
.side li { display: flex; align-items: center; gap: 3px; padding-left: 21px; white-space: nowrap; }
.side .top { padding-left: 14px; }
.side .sel { border: 1px solid #ddd; margin: 0 1px; padding-left: 12px; }
.files { padding: 7px 10px 0 8px; }
.files h3 { display: flex; align-items: center; gap: 4px; height: 16px; font-size: 10px; color: #33385e; }
.files h3::after { content: ""; flex: 1; height: 1px; margin-left: 8px; background: #f2f2f2; }
.items { display: grid; grid-template-columns: 179px 179px; grid-auto-rows: 1fr; padding-left: 4px; }
.folders { height: 118px; margin-bottom: 3px; }
.drives { height: 157px; margin-top: 1px; }
.item { display: flex; align-items: center; gap: 4px; width: 175px; margin: 1px 0; padding-left: 1px; line-height: 11px; border: 1px solid transparent; }
.item small { display: block; font-size: 8px; line-height: 11px; color: #666; }
.hot { border-color: #e4e4e4; }
.ico { width: 33px; height: 34px; }
.hd { height: 22px; margin-top: 8px; }
.logo { height: 30px; }
.bar { width: 133px; height: 10px; border: 1px solid #999; background: #fff; }
.bar i { display: block; height: 8px; background: #1a6878; }
.dvdwrap { position: relative; }
.dvdwrap b { position: absolute; left: 13px; top: 12px; width: 20px; color: #fff; font-size: 7px; line-height: 11px; text-align: center; }
.expstatus { display: flex; align-items: center; gap: 4px; height: 17px; padding: 0 6px 0 10px; color: #444; }
.cursor { position: absolute; left: 335px; top: 367px; width: 9px; height: 15px; }
```
